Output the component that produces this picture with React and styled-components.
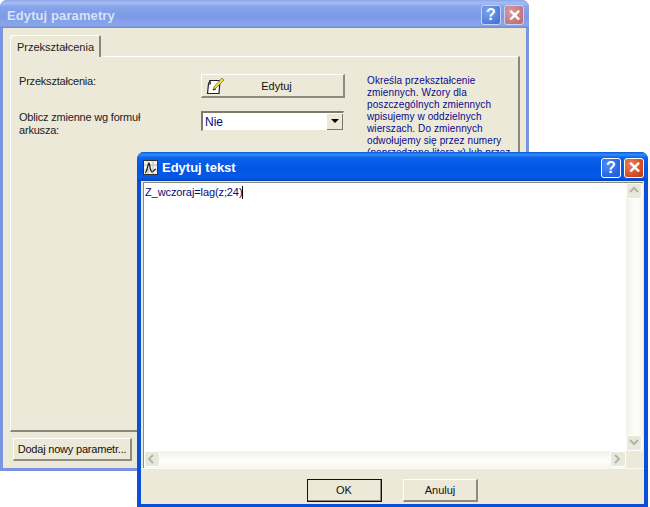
import React from "react";
import styled, { createGlobalStyle } from "styled-components";

const GlobalStyle = createGlobalStyle`
  html, body { margin: 0; padding: 0; background: #fff; }
  body { font-family: "Liberation Sans", Arial, sans-serif; font-size: 11px; color: #000; }
`;

const Desktop = styled.div`
  position: relative;
  width: 650px;
  height: 507px;
  overflow: hidden;
  background: #fff;
`;

const Window = styled.div`
  position: absolute;
  left: ${(p) => p.$left}px;
  top: ${(p) => p.$top}px;
  width: ${(p) => p.$width}px;
  height: ${(p) => p.$height}px;
  box-sizing: border-box;
  display: flex;
  flex-direction: column;
  border-radius: 7px 7px 0 0;
  overflow: hidden;
  background: ${(p) => (p.$active ? "#0a4fd8" : "#7b94e2")};
`;

const TitleBar = styled.div`
  flex: none;
  height: ${(p) => (p.$active ? 29 : 28)}px;
  box-sizing: border-box;
  display: flex;
  align-items: center;
  gap: 3px;
  padding: 2px ${(p) => (p.$active ? 4 : 5)}px 0 ${(p) => (p.$active ? 6 : 7)}px;
  background: ${(p) =>
    p.$active
      ? "linear-gradient(180deg, #0a58e0 0%, #2f8cf5 9%, #0c62ea 20%, #0355e4 60%, #0459e6 88%, #0443b8 100%)"
      : "linear-gradient(180deg, #8fa6ea 0%, #a3bdf3 10%, #86a3ea 25%, #7d9ae6 60%, #8aa7ec 90%, #7187cf 100%)"};
`;

const TitleText = styled.div`
  flex: 1;
  font-family: "Liberation Sans", Arial, sans-serif;
  font-weight: bold;
  font-size: 13px;
  letter-spacing: ${(p) => (p.$active ? "0" : "0.1px")};
  margin-left: ${(p) => (p.$active ? 1 : 0)}px;
  color: ${(p) => (p.$active ? "#fff" : "#d7e2f7")};
`;

const CaptionButton = styled.div`
  width: 20px;
  height: 20px;
  box-sizing: border-box;
  border: 1px solid ${(p) => (p.$active ? "#fff" : "#c7d3f3")};
  border-radius: 3px;
  display: flex;
  align-items: center;
  justify-content: center;
  font-family: "Liberation Sans", Arial, sans-serif;
  font-weight: bold;
  font-size: 16px;
  color: #fff;
  background: ${(p) => {
    if (p.$close) {
      return p.$active
        ? "radial-gradient(circle at 30% 30%, #e8805e, #d3471f 70%, #bd3a16)"
        : "radial-gradient(circle at 30% 30%, #d89a9e, #c0717c 80%)";
    }
    return p.$active
      ? "radial-gradient(circle at 30% 30%, #4f8ef5, #1c5fe0 80%)"
      : "radial-gradient(circle at 30% 30%, #7ea2ee, #4a76dc 80%)";
  }};
`;

const Body = styled.div`
  flex: 1;
  min-height: 0;
  margin: ${(p) => (p.$active ? "0 4px 3px" : "0 3px 3px")};
  background: #ece9d8;
  display: flex;
  flex-direction: column;
`;

const TabRow = styled.div`
  flex: none;
  display: flex;
  padding: 7px 0 0 7px;
`;

const Tab = styled.div`
  width: 91px;
  height: 22px;
  box-sizing: border-box;
  margin-bottom: -1px;
  position: relative;
  z-index: 1;
  background: #ece9d8;
  border: 1px solid #fff;
  border-bottom: none;
  border-right: 2px solid #8a8878;
  border-radius: 3px 2px 0 0;
  padding: 5px 0 0 6px;
  color: #222;
  font-size: 11px;
`;

const Pane = styled.div`
  margin: 0 6px 0 7px;
  height: 376px;
  flex: none;
  box-sizing: border-box;
  border-top: 1px solid #fff;
  border-left: 1px solid #fff;
  border-right: 2px solid #8a8878;
  border-bottom: 2px solid #8a8878;
  padding: 17px 0 0 8px;
  display: grid;
  grid-template-columns: 182px 143px 1fr;
  grid-template-rows: 24px auto;
  row-gap: 13px;
  align-items: start;
`;

const FieldLabel = styled.div`
  color: #222;
  font-size: 11px;
  line-height: 13px;
  letter-spacing: -0.2px;
  padding-top: ${(p) => p.$pad || 0}px;
  width: 135px;
`;

const Button = styled.div`
  box-sizing: border-box;
  width: ${(p) => p.$width}px;
  height: ${(p) => p.$height}px;
  display: flex;
  align-items: center;
  justify-content: center;
  background: #ece9d8;
  border-top: 1px solid #fff;
  border-left: 1px solid #fff;
  border-right: 2px solid #8d8b7c;
  border-bottom: 2px solid #8d8b7c;
  color: #111;
  font-size: 11px;
  letter-spacing: ${(p) => p.$tight ? "-0.2px" : "0"};
  ${(p) => p.$default && "outline: 1px solid #111; outline-offset: -1px;"}
`;

const EditButton = styled(Button)`
  position: relative;
  padding-left: 8px;
`;

const EditIcon = styled.svg`
  position: absolute;
  left: 3px;
  top: 2px;
`;

const Combo = styled.div`
  width: 143px;
  height: 20px;
  box-sizing: border-box;
  background: #fff;
  border: 1px solid #ece9d8;
  border-top: 2px solid #7d7b6c;
  border-left: 2px solid #7d7b6c;
  display: flex;
  align-items: center;
  justify-content: space-between;
  color: #0a0a78;
  font-size: 12px;
  padding-left: 2px;
`;

const ComboArrow = styled.div`
  width: 16px;
  height: 16px;
  box-sizing: border-box;
  background: #ece9d8;
  border-right: 1px solid #777;
  border-bottom: 1px solid #777;
  display: flex;
  align-items: center;
  justify-content: center;
  &::after {
    content: "";
    border-left: 4px solid transparent;
    border-right: 4px solid transparent;
    border-top: 4px solid #000;
  }
`;

const HelpText = styled.div`
  grid-column: 3;
  grid-row: 1 / span 2;
  margin: 1px 0 0 23px;
  white-space: nowrap;
  font-size: 10px;
  line-height: 12px;
  letter-spacing: 0.1px;
  color: #0a0a8c;
`;

const Footer = styled.div`
  flex: none;
  padding: 6px 0 0 10px;
`;

const EditArea = styled.div`
  flex: none;
  height: 285px;
  margin: 1px 1px 0 2px;
  display: grid;
  grid-template-columns: 1fr 17px;
  grid-template-rows: 1fr 17px;
  background: #fff;
  border-top: 1px solid #8d8b7c;
  border-left: 1px solid #8d8b7c;
`;

const EditorText = styled.div`
  padding: 3px 0 0 1px;
  color: #0a0a78;
  font-size: 11px;
  line-height: 13px;
  letter-spacing: -0.1px;
`;

const Caret = styled.span`
  display: inline-block;
  width: 1px;
  height: 13px;
  background: #000;
  vertical-align: top;
`;

const ScrollTrack = styled.div`
  display: flex;
  flex-direction: ${(p) => (p.$horizontal ? "row" : "column")};
  justify-content: space-between;
  background: ${(p) =>
    p.$horizontal
      ? "linear-gradient(180deg, #f3f1e8, #fdfdfb 60%, #f6f4ec)"
      : "linear-gradient(90deg, #f3f1e8, #fdfdfb 60%, #f6f4ec)"};
`;

const ScrollButton = styled.div`
  width: 16px;
  height: 16px;
  box-sizing: border-box;
  border: 1px solid #fff;
  border-radius: 2px;
  background: #e9e8dd;
  display: flex;
  align-items: center;
  justify-content: center;
`;

const ScrollCorner = styled.div`
  background: #ece9d8;
`;

const ButtonRow = styled.div`
  flex: 1;
  display: flex;
  align-items: flex-start;
  justify-content: flex-start;
  gap: 21px;
  padding: 10px 0 0 166px;
  border-top: 1px solid #fbfaf5;
`;

const Chevron = ({ dir }) => {
  const points = {
    up: "1,6 5,2 9,6",
    down: "1,2 5,6 9,2",
    left: "6,1 2,5 6,9",
    right: "2,1 6,5 2,9",
  };
  return (
    <svg width="10" height="10" viewBox="0 0 10 10" fill="none">
      <polyline points={points[dir]} stroke="#b5b5a6" strokeWidth="2" />
    </svg>
  );
};

const ChartIcon = () => (
  <svg width="15" height="15" viewBox="0 0 15 15">
    <rect x="0.5" y="0.5" width="14" height="14" fill="#f4f1e4" stroke="#333" />
    <path d="M1 5h13M1 10h13M5 1v13M10 1v13" stroke="#b8b8c8" strokeWidth="1" />
    <path d="M2 13C4 13 5 3 6 3s1 9 3 9 2-3 4-3" fill="none" stroke="#111" strokeWidth="1.2" />
  </svg>
);

const NoteIcon = () => (
  <EditIcon width="22" height="18" viewBox="0 0 22 18" fill="none">
    <path d="M5 3.5h10l-1 13H2.5L3.5 7z" fill="#fff" stroke="#222" strokeWidth="1.2" />
    <path d="M3.5 7H5.5L5 3.5" stroke="#222" strokeWidth="1" />
    <path d="M8 13l1-3 8-9 2 2-8 8z" fill="#f2e04a" stroke="#7a7020" strokeWidth="0.8" />
    <path d="M8 13l3-1" stroke="#222" strokeWidth="1" />
  </EditIcon>
);

const helpLines = [
  "Określa przekształcenie",
  "zmiennych. Wzory dla",
  "poszczególnych zmiennych",
  "wpisujemy w oddzielnych",
  "wierszach. Do zmiennych",
  "odwołujemy się przez numery",
  "(poprzedzone literą x) lub przez",
];

const App = () => (
  <Desktop>
    <GlobalStyle />

    <Window $left={0} $top={0} $width={529} $height={471}>
      <TitleBar>
        <TitleText>Edytuj parametry</TitleText>
        <CaptionButton>?</CaptionButton>
        <CaptionButton $close>✕</CaptionButton>
      </TitleBar>
      <Body>
        <TabRow>
          <Tab>Przekształcenia</Tab>
        </TabRow>
        <Pane>
          <FieldLabel $pad={1}>Przekształcenia:</FieldLabel>
          <EditButton $width={144} $height={24}>
            <NoteIcon />
            Edytuj
          </EditButton>
          <HelpText>
            {helpLines.map((line) => (
              <div key={line}>{line}</div>
            ))}
          </HelpText>
          <FieldLabel>Oblicz zmienne wg formuł arkusza:</FieldLabel>
          <Combo>
            Nie
            <ComboArrow />
          </Combo>
        </Pane>
        <Footer>
          <Button $tight $width={119} $height={23}>Dodaj nowy parametr...</Button>
        </Footer>
      </Body>
    </Window>

    <Window $active $left={137} $top={152} $width={511} $height={355}>
      <TitleBar $active>
        <ChartIcon />
        <TitleText $active>Edytuj tekst</TitleText>
        <CaptionButton $active>?</CaptionButton>
        <CaptionButton $active $close>✕</CaptionButton>
      </TitleBar>
      <Body $active>
        <EditArea>
          <EditorText>
            Z_wczoraj=lag(z;24)<Caret />
          </EditorText>
          <ScrollTrack>
            <ScrollButton><Chevron dir="up" /></ScrollButton>
            <ScrollButton><Chevron dir="down" /></ScrollButton>
          </ScrollTrack>
          <ScrollTrack $horizontal>
            <ScrollButton><Chevron dir="left" /></ScrollButton>
            <ScrollButton><Chevron dir="right" /></ScrollButton>
          </ScrollTrack>
          <ScrollCorner />
        </EditArea>
        <ButtonRow>
          <Button $default $width={75} $height={23}>OK</Button>
          <Button $width={75} $height={23}>Anuluj</Button>
        </ButtonRow>
      </Body>
    </Window>
  </Desktop>
);

export default App;
